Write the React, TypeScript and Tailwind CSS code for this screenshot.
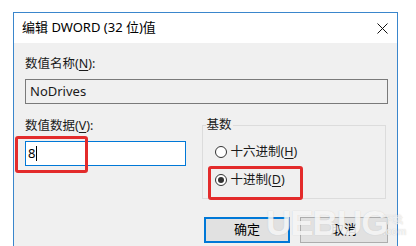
import React from "react";

const font = {
  fontFamily: '"Noto Sans", "Noto Sans CJK SC", sans-serif',
};

const Radio: React.FC<{ checked?: boolean; label: string; accel: string }> = ({
  checked,
  label,
  accel,
}) => (
  <div className="flex items-center h-[20px]">
    <span className="w-[12px] h-[12px] rounded-full border border-[#333333] bg-white flex items-center justify-center">
      {checked ? <span className="w-[6px] h-[6px] rounded-full bg-[#333333]" /> : null}
    </span>
    <span className="ml-[4px] text-[12.5px] text-[#1a1a1a] leading-[20px]">
      {label}(<span className="underline underline-offset-2">{accel}</span>)
    </span>
  </div>
);

export default function App() {
  return (
    <div
      className="relative w-[416px] h-[246px] overflow-hidden bg-white pl-[13px] pt-[12px]"
      style={font}
    >
      {/* Dialog window */}
      <div className="w-[385px] h-[260px] border-x border-t border-[#3a86cc] flex flex-col">
        {/* Title bar */}
        <div className="h-[30px] bg-white flex items-center justify-between pl-[8px] pr-[9px]">
          <span className="text-[13px] text-black">编辑 DWORD (32 位)值</span>
          <svg width="11" height="11" viewBox="0 0 11 11">
            <path d="M0.5 0.5 L10.5 10.5 M10.5 0.5 L0.5 10.5" stroke="#111" strokeWidth="1" />
          </svg>
        </div>

        {/* Body */}
        <div className="flex-1 bg-[#f0f0f0] px-[11px] pt-[13px]">
          <div className="text-[12.5px] leading-[16px] h-[16px] text-[#1a1a1a]">
            数值名称(<span className="underline underline-offset-2">N</span>):
          </div>
          <div className="mt-[7px] w-[363px] h-[25px] border border-[#7a7a7a] px-[4px] flex items-center text-[13px] text-[#1a1a1a]">
            NoDrives
          </div>

          <div className="mt-[14px] flex gap-[16px]">
            {/* Value data */}
            <div className="w-[162px]">
              <div className="text-[12.5px] leading-[16px] h-[16px] text-[#1a1a1a]">
                数值数据(<span className="underline underline-offset-2">V</span>):
              </div>
              <div className="mt-[7px] h-[25px] border border-[#0078d7] bg-white pl-[2px] flex items-center text-[13px] text-black">
                8<span className="ml-[1px] w-px h-[15px] bg-black" />
              </div>
            </div>

            {/* Base group */}
            <div className="relative mt-[7px] w-[186px] h-[74px] border border-[#dcdcdc] pl-[12px] pt-[16px] flex flex-col gap-[8px]">
              <span className="absolute -top-[9px] left-[3px] px-[1px] bg-[#f0f0f0] text-[12.5px] leading-[16px] text-[#1a1a1a]">
                基数
              </span>
              <Radio label="十六进制" accel="H" />
              <Radio checked label="十进制" accel="D" />
            </div>
          </div>

          {/* Buttons */}
          <div className="mt-[18px] w-[363px] flex justify-end gap-[10px]">
            <button className="w-[86px] h-[26px] border-2 border-[#0078d7] bg-[#e1e1e1] text-[13px] text-black">
              确定
            </button>
            <button className="w-[88px] h-[26px] border border-[#adadad] bg-[#e1e1e1] text-[13px] text-black">
              取消
            </button>
          </div>
        </div>
      </div>

      {/* Red annotation boxes */}
      <div className="absolute left-[15px] top-[136px] w-[73px] h-[37px] rounded-[3px] border-[3px] border-[#e32b2b]" />
      <div className="absolute left-[208px] top-[166px] w-[95px] h-[34px] rounded-[3px] border-[3px] border-[#e32b2b]" />

      {/* Watermark */}
      <div
        className="absolute left-[266px] top-[203px] text-[35px] font-bold tracking-[-1px] text-white/80 leading-[40px]"
        style={{ fontFamily: '"Liberation Sans", sans-serif', textShadow: "0 0 1px rgba(120,120,120,0.35)" }}
      >
        UEBUG
      </div>
      <div
        className="absolute left-[383px] top-[214px] text-[10px] font-bold leading-[12px] text-white/70"
        style={{ fontFamily: '"Liberation Sans", sans-serif', textShadow: "0 0 1px rgba(120,120,120,0.35)" }}
      >
        下载
        <br />
        .com
      </div>
    </div>
  );
}
